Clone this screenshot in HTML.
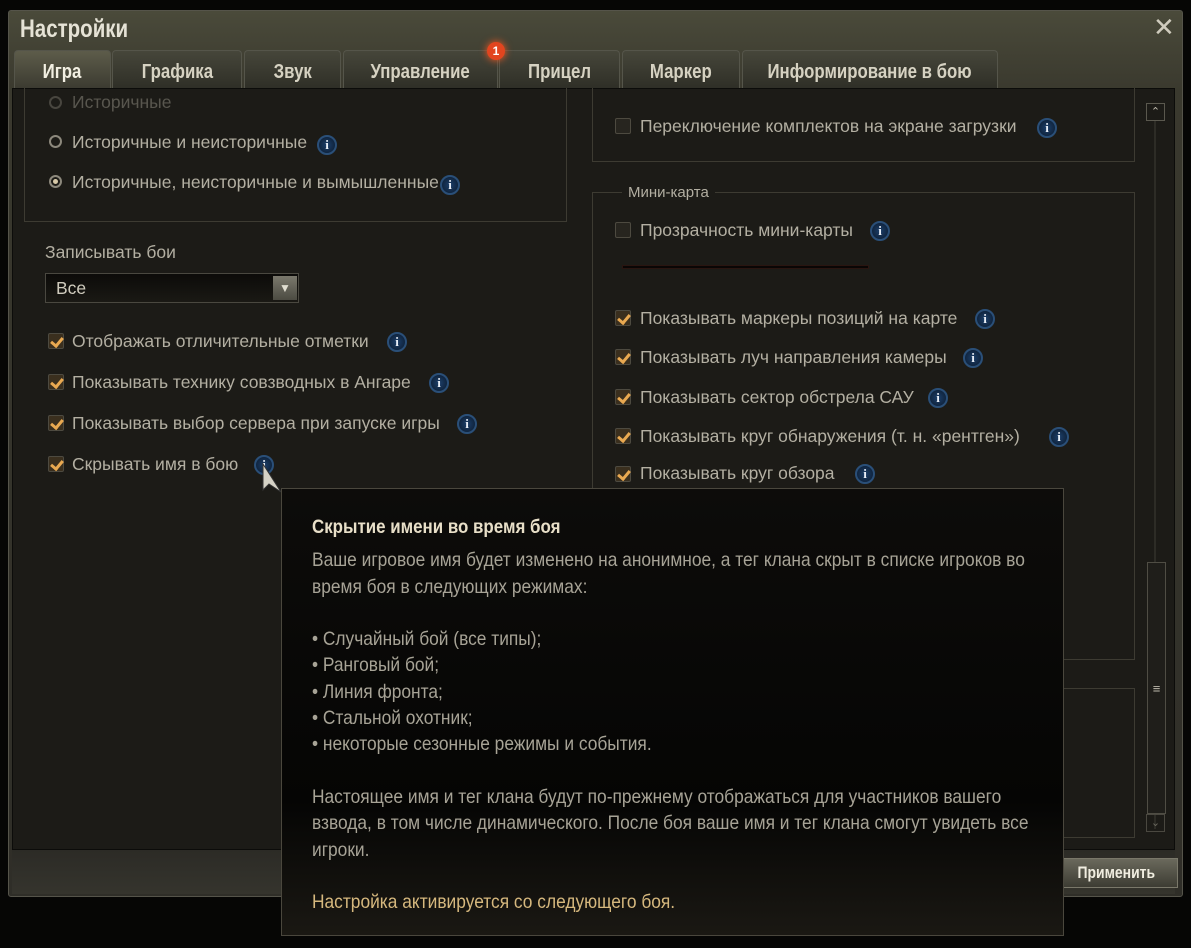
<!DOCTYPE html>
<html><head><meta charset="utf-8"><style>
*{margin:0;padding:0;box-sizing:border-box}
body{width:1191px;height:948px;background:#060605;position:relative;overflow:hidden;font-family:"Liberation Sans","DejaVu Sans",sans-serif;color:#b5b1a4}
.abs{position:absolute}
.frame{left:8px;top:10px;width:1175px;height:887px;background:linear-gradient(#4a4a3a,#3a392e 80px,#2f2e28);border:1px solid #55544a;border-radius:3px}
.title{left:20px;top:15px;font-weight:bold;font-size:25px;color:#e6e3d6;transform:scaleX(.82);transform-origin:left}
.close{left:1153px;top:12px;font-size:26px;font-weight:bold;color:#cfcbbd}
.tab{top:50px;height:38px;background:linear-gradient(#46463a,#2f2f27);border:1px solid #55554a;border-bottom:none;border-radius:4px 4px 0 0;font-weight:bold;font-size:20px;color:#d6d2c2;text-align:center;line-height:42px}
.tab span{display:inline-block;transform:scaleX(.84)}
.tab.act{background:linear-gradient(#5d5c4a,#3c3b31);color:#f2efe2}
.content{left:12px;top:88px;width:1163px;height:762px;background:#1c1b17;border:1px solid #0c0c0a}
.bottom{left:12px;top:850px;width:1163px;height:44px;background:linear-gradient(#2c2b26,#35342d)}
.box{border:1px solid #3d3b32}
.t{position:absolute;font-size:17.5px;white-space:nowrap;color:#b3afa2}
.cb{position:absolute;width:16px;height:16px;border:1px solid #4d4a40;background:#27251f;border-radius:2px}
.cb.on{background:#3a2f1e}
.cb.on::after{content:"";position:absolute;left:4px;top:1px;width:5px;height:9px;border:solid #e9a951;border-width:0 3px 3px 0;transform:rotate(40deg)}
.rd{position:absolute;width:13px;height:13px;border:2px solid #8c887c;border-radius:50%}
.rd.on::after{content:"";position:absolute;left:2px;top:2px;width:5px;height:5px;border-radius:50%;background:#d7c9a8}
.i{position:absolute;width:20px;height:20px;border-radius:50%;background:radial-gradient(#1c3f6a,#0b1a2d);border:2px solid #2a4f78;color:#e8eef6;font:bold 13px "Liberation Serif",serif;text-align:center;line-height:16px}
.tip{left:281px;top:488px;width:783px;height:448px;background:linear-gradient(#0d0c0a,#050504 70%,#1a1813);border:1px solid #4a473d;font-size:19.5px;color:#a7a396;padding:26px 0 0 30px;line-height:26.3px}
.tip p{white-space:nowrap;transform:scaleX(.89);transform-origin:left}
</style></head><body>
<div class="abs frame"></div>
<div class="abs title">Настройки</div>
<div class="abs close">✕</div>
<div class="abs tab act" style="left:14px;width:97px"><span>Игра</span></div>
<div class="abs tab" style="left:112px;width:130px"><span>Графика</span></div>
<div class="abs tab" style="left:244px;width:97px"><span>Звук</span></div>
<div class="abs tab" style="left:343px;width:155px"><span>Управление</span></div>
<div class="abs tab" style="left:499px;width:121px"><span>Прицел</span></div>
<div class="abs tab" style="left:622px;width:118px"><span>Маркер</span></div>
<div class="abs tab" style="left:742px;width:256px"><span>Информирование в бою</span></div>
<div class="abs" style="left:487px;top:42px;width:18px;height:18px;border-radius:50%;background:#e2451f;box-shadow:0 0 8px #ff5a20;color:#fff;font-size:12px;font-weight:bold;text-align:center;line-height:18px">1</div>
<div class="abs content"></div>
<div class="abs bottom"></div>
<!-- left -->
<div class="abs box" style="left:24px;top:88px;width:543px;height:134px;border-top:none"></div>
<div class="rd" style="left:49px;top:96px;opacity:.4"></div><div class="t" style="left:72px;top:92px;opacity:.4">Историчные</div>
<div class="rd" style="left:49px;top:135px"></div><div class="t" style="left:72px;top:132px">Историчные и неисторичные</div><div class="i" style="left:317px;top:135px">i</div>
<div class="rd on" style="left:49px;top:175px"></div><div class="t" style="left:72px;top:172px">Историчные, неисторичные и вымышленные</div><div class="i" style="left:440px;top:175px">i</div>
<div class="t" style="left:45px;top:242px">Записывать бои</div>
<div class="abs" style="left:45px;top:273px;width:254px;height:30px;background:linear-gradient(#0c0b09,#1a1914);border:1px solid #4a4840"></div>
<div class="t" style="left:56px;top:278px;color:#cfcbbd">Все</div>
<div class="abs" style="left:273px;top:276px;width:24px;height:24px;background:linear-gradient(#7a786c,#4c4b42);color:#e0ddd0;font-size:12px;text-align:center;line-height:24px">▼</div>
<div class="cb on" style="left:48px;top:333px"></div><div class="t" style="left:72px;top:331px">Отображать отличительные отметки</div><div class="i" style="left:387px;top:332px">i</div>
<div class="cb on" style="left:48px;top:374px"></div><div class="t" style="left:72px;top:372px">Показывать технику совзводных в Ангаре</div><div class="i" style="left:429px;top:373px">i</div>
<div class="cb on" style="left:48px;top:415px"></div><div class="t" style="left:72px;top:413px">Показывать выбор сервера при запуске игры</div><div class="i" style="left:457px;top:414px">i</div>
<div class="cb on" style="left:48px;top:456px"></div><div class="t" style="left:72px;top:454px">Скрывать имя в бою</div><div class="i" style="left:254px;top:455px">i</div>
<svg class="abs" style="left:260px;top:462px" width="26" height="34"><path d="M3 2 L3 28 L9 22 L21 30 Z" fill="#d5d2c6" stroke="#333" stroke-width="1"/></svg>
<!-- right -->
<div class="abs box" style="left:592px;top:88px;width:543px;height:74px;border-top:none"></div>
<div class="cb" style="left:615px;top:118px"></div><div class="t" style="left:640px;top:116px">Переключение комплектов на экране загрузки</div><div class="i" style="left:1037px;top:118px">i</div>
<div class="abs box" style="left:592px;top:192px;width:543px;height:468px"></div>
<div class="t" style="left:622px;top:184px;font-size:15px;background:#1c1b17;padding:0 6px">Мини-карта</div>
<div class="cb" style="left:615px;top:222px"></div><div class="t" style="left:640px;top:220px">Прозрачность мини-карты</div><div class="i" style="left:870px;top:221px">i</div>
<div class="abs" style="left:622px;top:265px;width:247px;height:4px;background:#0a0605;border:1px solid #2a1510"></div>
<div class="cb on" style="left:615px;top:310px"></div><div class="t" style="left:640px;top:308px">Показывать маркеры позиций на карте</div><div class="i" style="left:975px;top:309px">i</div>
<div class="cb on" style="left:615px;top:349px"></div><div class="t" style="left:640px;top:347px">Показывать луч направления камеры</div><div class="i" style="left:963px;top:348px">i</div>
<div class="cb on" style="left:615px;top:389px"></div><div class="t" style="left:640px;top:387px">Показывать сектор обстрела САУ</div><div class="i" style="left:928px;top:388px">i</div>
<div class="cb on" style="left:615px;top:428px"></div><div class="t" style="left:640px;top:426px">Показывать круг обнаружения (т. н. «рентген»)</div><div class="i" style="left:1049px;top:427px">i</div>
<div class="cb on" style="left:615px;top:466px"></div><div class="t" style="left:640px;top:463px">Показывать круг обзора</div><div class="i" style="left:855px;top:464px">i</div>
<div class="abs box" style="left:592px;top:688px;width:543px;height:150px"></div>
<!-- scrollbar -->
<div class="abs" style="left:1146px;top:103px;width:19px;height:18px;border:1px solid #5a584e;color:#bdb9ac;font-size:11px;text-align:center;line-height:16px">⌃</div>
<div class="abs" style="left:1154px;top:121px;width:2px;height:708px;background:#2d2c26"></div>
<div class="abs" style="left:1147px;top:562px;width:19px;height:252px;border:1px solid #4f4d44;background:#1f1e1a;color:#bdb9ac;font-size:13px;text-align:center;line-height:252px">≡</div>
<div class="abs" style="left:1146px;top:814px;width:19px;height:18px;border:1px solid #4a4840;color:#6a685e;font-size:11px;text-align:center;line-height:16px">⌄</div>
<!-- buttons -->
<div class="abs" style="left:1055px;top:858px;width:123px;height:30px;background:linear-gradient(#6a695c,#3d3c33);border:1px solid #7a786a;color:#f0ede0;font-weight:bold;font-size:17px;text-align:center;line-height:28px"><span style="display:inline-block;transform:scaleX(.82)">Применить</span></div>
<!-- tooltip -->
<div class="abs tip">
<p style="color:#e8dfc8;font-weight:bold;font-size:19px;margin-bottom:6px">Скрытие имени во время боя</p>
<p>Ваше игровое имя будет изменено на анонимное, а тег клана скрыт в списке игроков во</p>
<p>время боя в следующих режимах:</p>
<p>&nbsp;</p>
<p>• Случайный бой (все типы);</p>
<p>• Ранговый бой;</p>
<p>• Линия фронта;</p>
<p>• Стальной охотник;</p>
<p>• некоторые сезонные режимы и события.</p>
<p>&nbsp;</p>
<p>Настоящее имя и тег клана будут по-прежнему отображаться для участников вашего</p>
<p>взвода, в том числе динамического. После боя ваше имя и тег клана смогут увидеть все</p>
<p>игроки.</p>
<p>&nbsp;</p>
<p style="color:#d6b87e">Настройка активируется со следующего боя.</p>
</div>
</body></html>
